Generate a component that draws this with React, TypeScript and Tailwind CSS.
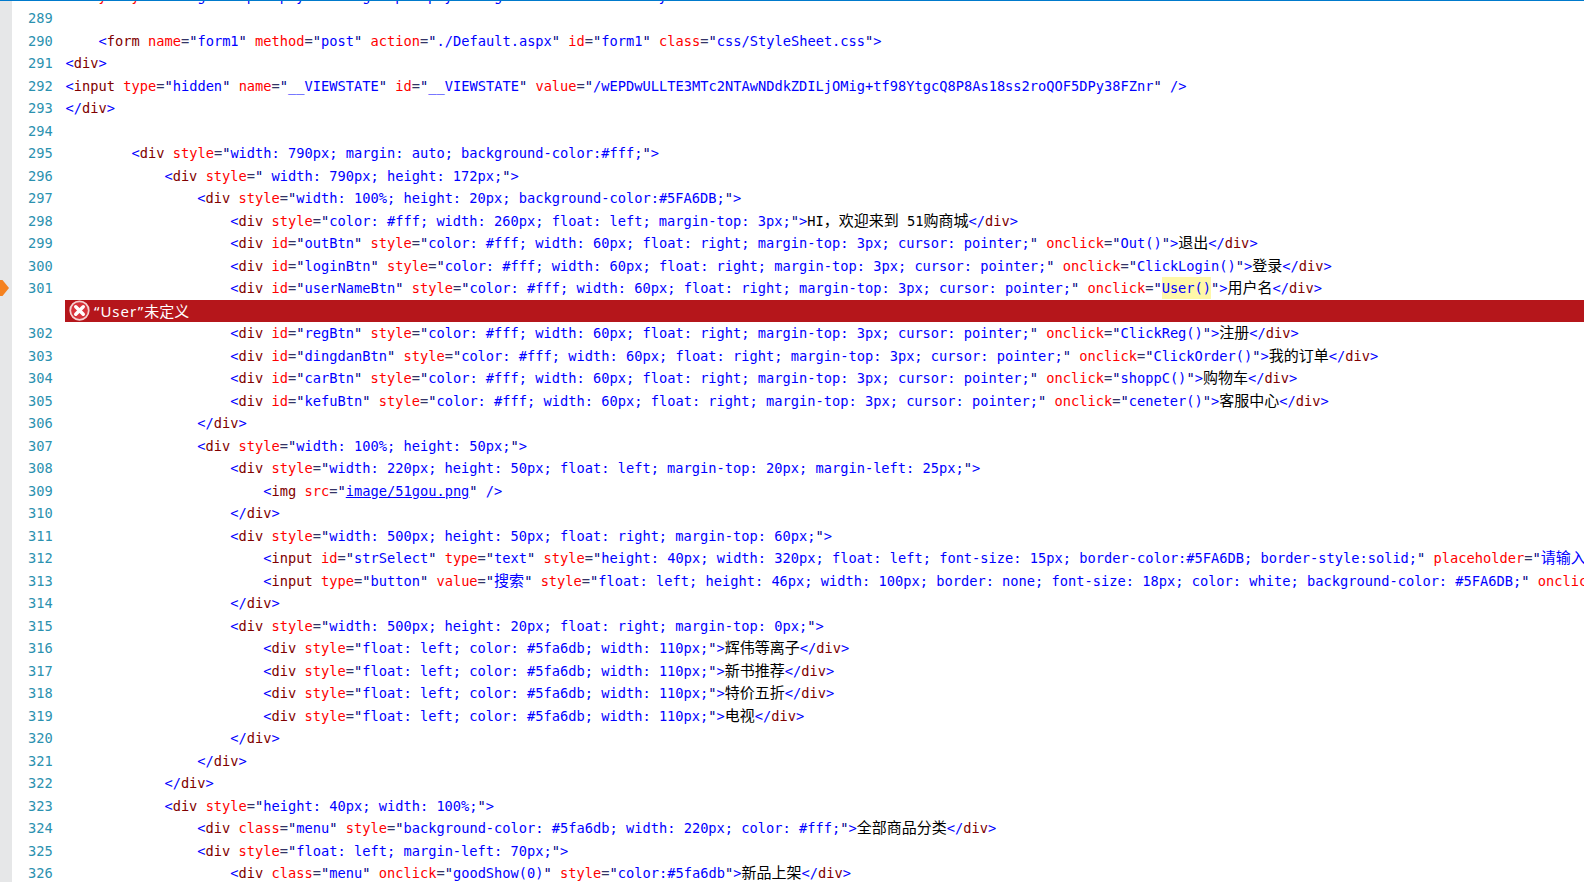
const LINES: [number, string][] = [
  [289, ''],
  [290, '    <form name="form1" method="post" action="./Default.aspx" id="form1" class="css/StyleSheet.css">'],
  [291, '<div>'],
  [292, '<input type="hidden" name="__VIEWSTATE" id="__VIEWSTATE" value="/wEPDwULLTE3MTc2NTAwNDdkZDILjOMig+tf98YtgcQ8P8As18ss2roQOF5DPy38FZnr" />'],
  [293, '</div>'],
  [294, ''],
  [295, '        <div style="width: 790px; margin: auto; background-color:#fff;">'],
  [296, '            <div style=" width: 790px; height: 172px;">'],
  [297, '                <div style="width: 100%; height: 20px; background-color:#5FA6DB;">'],
  [298, '                    <div style="color: #fff; width: 260px; float: left; margin-top: 3px;">HI，欢迎来到 51购商城</div>'],
  [299, '                    <div id="outBtn" style="color: #fff; width: 60px; float: right; margin-top: 3px; cursor: pointer;" onclick="Out()">退出</div>'],
  [300, '                    <div id="loginBtn" style="color: #fff; width: 60px; float: right; margin-top: 3px; cursor: pointer;" onclick="ClickLogin()">登录</div>'],
  [301, '                    <div id="userNameBtn" style="color: #fff; width: 60px; float: right; margin-top: 3px; cursor: pointer;" onclick="User()">用户名</div>'],
  [302, '                    <div id="regBtn" style="color: #fff; width: 60px; float: right; margin-top: 3px; cursor: pointer;" onclick="ClickReg()">注册</div>'],
  [303, '                    <div id="dingdanBtn" style="color: #fff; width: 60px; float: right; margin-top: 3px; cursor: pointer;" onclick="ClickOrder()">我的订单</div>'],
  [304, '                    <div id="carBtn" style="color: #fff; width: 60px; float: right; margin-top: 3px; cursor: pointer;" onclick="shoppC()">购物车</div>'],
  [305, '                    <div id="kefuBtn" style="color: #fff; width: 60px; float: right; margin-top: 3px; cursor: pointer;" onclick="ceneter()">客服中心</div>'],
  [306, '                </div>'],
  [307, '                <div style="width: 100%; height: 50px;">'],
  [308, '                    <div style="width: 220px; height: 50px; float: left; margin-top: 20px; margin-left: 25px;">'],
  [309, '                        <img src="image/51gou.png" />'],
  [310, '                    </div>'],
  [311, '                    <div style="width: 500px; height: 50px; float: right; margin-top: 60px;">'],
  [312, '                        <input id="strSelect" type="text" style="height: 40px; width: 320px; float: left; font-size: 15px; border-color:#5FA6DB; border-style:solid;" placeholder="请输入商品名称" />'],
  [313, '                        <input type="button" value="搜索" style="float: left; height: 46px; width: 100px; border: none; font-size: 18px; color: white; background-color: #5FA6DB;" onclick="Search()" />'],
  [314, '                    </div>'],
  [315, '                    <div style="width: 500px; height: 20px; float: right; margin-top: 0px;">'],
  [316, '                        <div style="float: left; color: #5fa6db; width: 110px;">辉伟等离子</div>'],
  [317, '                        <div style="float: left; color: #5fa6db; width: 110px;">新书推荐</div>'],
  [318, '                        <div style="float: left; color: #5fa6db; width: 110px;">特价五折</div>'],
  [319, '                        <div style="float: left; color: #5fa6db; width: 110px;">电视</div>'],
  [320, '                    </div>'],
  [321, '                </div>'],
  [322, '            </div>'],
  [323, '            <div style="height: 40px; width: 100%;">'],
  [324, '                <div class="menu" style="background-color: #5fa6db; width: 220px; color: #fff;">全部商品分类</div>'],
  [325, '                <div style="float: left; margin-left: 70px;">'],
  [326, '                    <div class="menu" onclick="goodShow(0)" style="color:#5fa6db">新品上架</div>'],
  [327, '                </div>'],
]

// only the descender tips of this line peek out under the top border
const CLIPPED_RED = '    y   y'
const CLIPPED_BLUE = '                g     p   p y       g   p   p y     g                   y'

const TOKEN = /(<\/?)(\w+)|([\w-]+)(=)(")([^"]*)(")?|(\/?>)|(\s+)|([^<>\s]+)/g

function Cjk({ text, className }: { text: string; className: string }) {
  const parts = text.split(/([\u3000-\u9fff\uff00-\uffef]+)/)
  return (
    <span className={className}>
      {parts.map((p, i) => (i % 2 === 1 ? <span key={i} className="text-[15px]">{p}</span> : p))}
    </span>
  )
}

function Code({ source }: { source: string }) {
  const out: React.ReactNode[] = []
  let i = 0
  for (const m of source.matchAll(TOKEN)) {
    if (m[1]) {
      out.push(<span key={i++} className="text-[#0000ff]">{m[1]}</span>)
      out.push(<span key={i++} className="text-[#800000]">{m[2]}</span>)
    } else if (m[3]) {
      out.push(<span key={i++} className="text-[#ff0000]">{m[3]}</span>)
      out.push(<span key={i++} className="text-[#333366]">=</span>)
      out.push(<span key={i++} className="text-[#000080]">"</span>)
      if (m[6] === 'User()') {
        out.push(<span key={i++} className="bg-[#fff8a8] py-[3px] text-[#0000ff]">{m[6]}</span>)
      } else if (m[3] === 'src') {
        out.push(<span key={i++} className="text-[#0000ff] underline">{m[6]}</span>)
      } else {
        out.push(<Cjk key={i++} text={m[6]} className="text-[#0000ff]" />)
      }
      if (m[7]) out.push(<span key={i++} className="text-[#000080]">"</span>)
    } else if (m[8]) {
      out.push(<span key={i++} className="text-[#0000ff]">{m[8]}</span>)
    } else if (m[9]) {
      out.push(m[9])
    } else {
      out.push(<Cjk key={i++} text={m[10]} className="text-black" />)
    }
  }
  return <>{out}</>
}

function Row({ num, marker, children }: { num?: number; marker?: boolean; children: React.ReactNode }) {
  return (
    <div className="flex h-[22.5px] shrink-0 items-center">
      <div className="flex h-full w-3 shrink-0 items-center bg-[#e6e7e8]">
        {marker && (
          <svg width="9" height="16" viewBox="0 0 9 16" className="shrink-0">
            <polygon points="0,0 2.5,0 9,8 2.5,16 0,16" fill="#f58220" />
          </svg>
        )}
      </div>
      <div className="w-[53.5px] shrink-0 pl-4 text-[#2b91af]">{num}</div>
      {children}
    </div>
  )
}

export default function App() {
  return (
    <div className="h-[882px] w-[1584px] overflow-hidden border-t border-[#007acc] bg-white font-['DejaVu_Sans_Mono','Noto_Sans_CJK_SC',monospace] text-[13.7px] leading-[22.5px] whitespace-pre">
      <div className="-mt-[16.5px] flex flex-col">
        <Row>
          <div>
            <span className="text-[#ff0000]">{CLIPPED_RED}</span>
            <span className="text-[#0000ff]">{CLIPPED_BLUE.slice(CLIPPED_RED.length)}</span>
          </div>
        </Row>
        {LINES.map(([num, source]) => (
          <div key={num} className="contents">
            <Row num={num} marker={num === 301}>
              <div>
                <Code source={source} />
              </div>
            </Row>
            {num === 301 && (
              <div className="flex h-[22.5px] shrink-0">
                <div className="w-3 shrink-0 bg-[#e6e7e8]" />
                <div className="w-[53px] shrink-0" />
                <div className="flex flex-1 items-center bg-[#b5161b] pl-1 font-['Noto_Sans','Noto_Sans_CJK_SC',sans-serif] text-[15px] text-white">
                  <svg width="21" height="21" viewBox="0 0 21 21" className="shrink-0">
                    <circle cx="10.5" cy="10.5" r="9.25" fill="#d8333b" stroke="#f5d0d0" strokeWidth="1.75" />
                    <path d="M6.75 6.75l7.5 7.5M14.25 6.75l-7.5 7.5" stroke="#fff" strokeWidth="3.5" strokeLinecap="round" />
                  </svg>
                  <span className="ml-1">
                    <span className="tracking-[1px]">“User”</span>未定义
                  </span>
                </div>
              </div>
            )}
          </div>
        ))}
      </div>
    </div>
  )
}
